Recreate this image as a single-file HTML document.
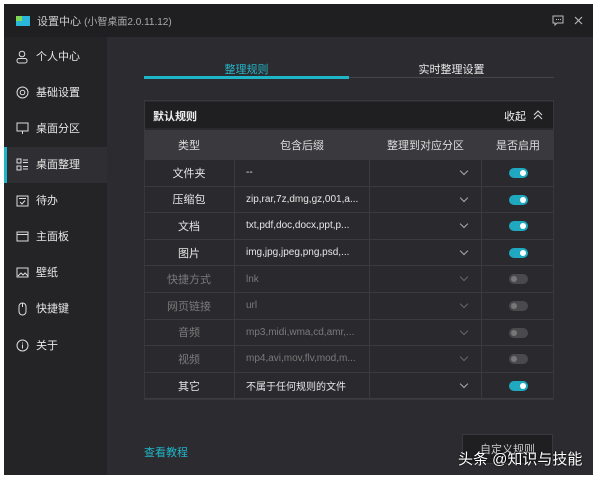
<!DOCTYPE html>
<html><head><meta charset="utf-8"><style>
*{margin:0;padding:0;box-sizing:border-box}
body{width:600px;height:480px;background:#fff;position:relative;overflow:hidden;font-family:"Liberation Sans","Noto Sans CJK SC",sans-serif;font-size:11px;color:#ddd}
.win{position:absolute;left:4px;top:4px;width:589px;height:471px;background:#2c2c30}
.title{position:absolute;left:0;top:0;width:589px;height:33px;background:#1f1f22}
.side{position:absolute;left:0;top:33px;width:103px;height:438px;background:#242427}
.it{position:absolute;left:0;width:103px;height:36px;line-height:36px;padding-left:32px;font-size:11px;color:#e6e6e6}
.it svg{position:absolute;left:12px;top:11px}
.act{background:#2f2f33}
.act:before{content:"";position:absolute;left:0;top:0;width:3px;height:36px;background:#1fb5c9}
.a{position:absolute}
.row{position:absolute;left:140px;width:410px;border-bottom:1px solid #3a3a3f}
.c{position:absolute;top:0;height:100%;display:flex;align-items:center;border-right:1px solid #3a3a3f}
.tg{position:absolute;left:365px;width:19px;height:10px;border-radius:5px}
.tg:after{content:"";position:absolute;right:2px;top:2px;width:6px;height:6px;border-radius:3px;background:#fff}
.off:after{left:2px;right:auto;background:#777}
.chev{position:absolute;left:317px;width:6px;height:6px;border-right:1.3px solid #aaa;border-bottom:1.3px solid #aaa;transform:rotate(45deg)}
</style></head><body>
<div class="win">
<div class="title">
 <div class="a" style="left:12px;top:12px;width:14px;height:10px;background:#29b6d8"></div>
 <div class="a" style="left:12px;top:12px;width:6px;height:5px;background:#7ed957"></div>
 <div class="a" style="left:33px;top:9px;font-size:11px;color:#ccc">设置中心 <span style="font-size:10px;color:#aaa">(小智桌面2.0.11.12)</span></div>
 <svg class="a" style="left:548px;top:11px" width="12" height="11"><path d="M1 1h10v7H5l-2 2V8H1z" fill="none" stroke="#bbb"/><path d="M4 4.5h1M6 4.5h1M8 4.5h1" stroke="#bbb"/></svg>
 <svg class="a" style="left:570px;top:12px" width="9" height="9"><path d="M1 1l7 7M8 1l-7 7" stroke="#bbb" stroke-width="1.1"/></svg>
</div>
<div class="side">
 <div class="it" style="top:2px"><svg width="12" height="14"><circle cx="6" cy="4" r="2.8" fill="none" stroke="#ddd"/><rect x="1" y="8.5" width="10" height="4.5" rx="2" fill="none" stroke="#ddd"/></svg>个人中心</div>
 <div class="it" style="top:38px"><svg width="13" height="13"><circle cx="6.5" cy="6.5" r="5.5" fill="none" stroke="#ddd"/><circle cx="6.5" cy="6.5" r="2.3" fill="none" stroke="#ddd"/></svg>基础设置</div>
 <div class="it" style="top:74px"><svg width="13" height="13"><rect x="1" y="1" width="11" height="8" fill="none" stroke="#ddd"/><path d="M6.5 9v3" stroke="#ddd"/></svg>桌面分区</div>
 <div class="it act" style="top:110px"><svg width="13" height="13"><rect x="1" y="1" width="4" height="4" fill="none" stroke="#ddd"/><rect x="1" y="8" width="4" height="4" fill="none" stroke="#ddd"/><path d="M7 2h5M7 4.5h5M7 8.5h5M7 11h5" stroke="#ddd"/></svg>桌面整理</div>
 <div class="it" style="top:146px"><svg width="13" height="13"><rect x="1" y="2" width="11" height="10" fill="none" stroke="#ddd"/><path d="M3 4.5h7M4 8l2 2 3-3.5" fill="none" stroke="#ddd"/></svg>待办</div>
 <div class="it" style="top:182px"><svg width="13" height="13"><rect x="1" y="2" width="11" height="9" fill="none" stroke="#ddd"/><path d="M1 4.5h11" stroke="#ddd"/></svg>主面板</div>
 <div class="it" style="top:218px"><svg width="13" height="13"><rect x="1" y="2" width="11" height="9" fill="none" stroke="#ddd"/><path d="M2 10l3-3 2 2 2-2 3 3" fill="none" stroke="#ddd"/></svg>壁纸</div>
 <div class="it" style="top:254px"><svg width="13" height="14"><rect x="3" y="1" width="7" height="12" rx="3.5" fill="none" stroke="#ddd"/><path d="M6.5 1v4" stroke="#ddd"/></svg>快捷键</div>
 <div class="it" style="top:291px"><svg width="13" height="13"><circle cx="6.5" cy="6.5" r="5.5" fill="none" stroke="#ddd"/><path d="M6.5 5.5v4M6.5 3.5v1" stroke="#ddd"/></svg>关于</div>
</div>
<div class="a" style="left:140px;top:57px;width:205px;text-align:center;color:#23b5c8;font-size:11px">整理规则</div>
<div class="a" style="left:345px;top:57px;width:205px;text-align:center;color:#e8e8e8;font-size:11px">实时整理设置</div>
<div class="a" style="left:140px;top:73px;width:410px;height:1px;background:#45454a"></div>
<div class="a" style="left:140px;top:72px;width:205px;height:3px;background:#1fb5c9"></div>
<div class="a" style="left:140px;top:96px;width:410px;height:300px;background:#2a2a2e;border:1px solid #38383c"></div>
<div class="a" style="left:141px;top:98px;width:408px;height:26px;background:#1f1f22"></div>
<div class="a" style="left:149px;top:104px;font-weight:bold;color:#eee">默认规则</div>
<div class="a" style="left:500px;top:104px;color:#eee">收起</div>
<svg class="a" style="left:529px;top:106px" width="10" height="10"><path d="M1 5l4-4 4 4M1 9l4-4 4 4" fill="none" stroke="#ddd"/></svg>
<div class="row" style="top:126px;height:30px;background:#3a3a3e">
 <div class="c" style="left:0;width:91px;justify-content:center">类型</div>
 <div class="c" style="left:91px;width:135px;justify-content:center">包含后缀</div>
 <div class="c" style="left:226px;width:112px;justify-content:center">整理到对应分区</div>
 <div class="c" style="left:338px;width:72px;justify-content:center;border:0">是否启用</div>
</div>
<div id="rows"></div>
<div class="a" style="left:140px;top:440px;color:#1fb5c9">查看教程</div>
<div class="a" style="left:458px;top:430px;width:91px;height:30px;background:#1f1f22;border:1px solid #3a3a3e;color:#ccc;text-align:center;line-height:30px">自定义规则</div>
</div>
<div class="a" style="left:458px;top:448px;font-size:15px;color:#fff;text-shadow:0 0 2px #000">头条 @知识与技能</div>
<script>
var d=[["文件夹","--",1],["压缩包","zip,rar,7z,dmg,gz,001,a...",1],["文档","txt,pdf,doc,docx,ppt,p...",1],["图片","img,jpg,jpeg,png,psd,...",1],["快捷方式","lnk",0],["网页链接","url",0],["音频","mp3,midi,wma,cd,amr,...",0],["视频","mp4,avi,mov,flv,mod,m...",0],["其它","不属于任何规则的文件",1]];
var h="";for(var i=0;i<d.length;i++){var t=156+i*26.6,on=d[i][2],col=on?"#e6e6e6":"#7a7a7a";
h+='<div class="row" style="top:'+t+'px;height:26.6px;color:'+col+'"><div class="c" style="left:0;width:91px;justify-content:center">'+d[i][0]+'</div><div class="c" style="left:91px;width:135px;padding-left:11px;font-size:10px">'+d[i][1]+'</div><div class="c" style="left:226px;width:112px"></div><div class="chev" style="top:8px;'+(on?'':'border-color:#666')+'"></div><div class="tg'+(on?'':' off')+'" style="top:8px;background:'+(on?'#1fa8c0':'#4a4a4e')+'"></div></div>';}
document.getElementById("rows").innerHTML=h;
</script>
</body></html>
